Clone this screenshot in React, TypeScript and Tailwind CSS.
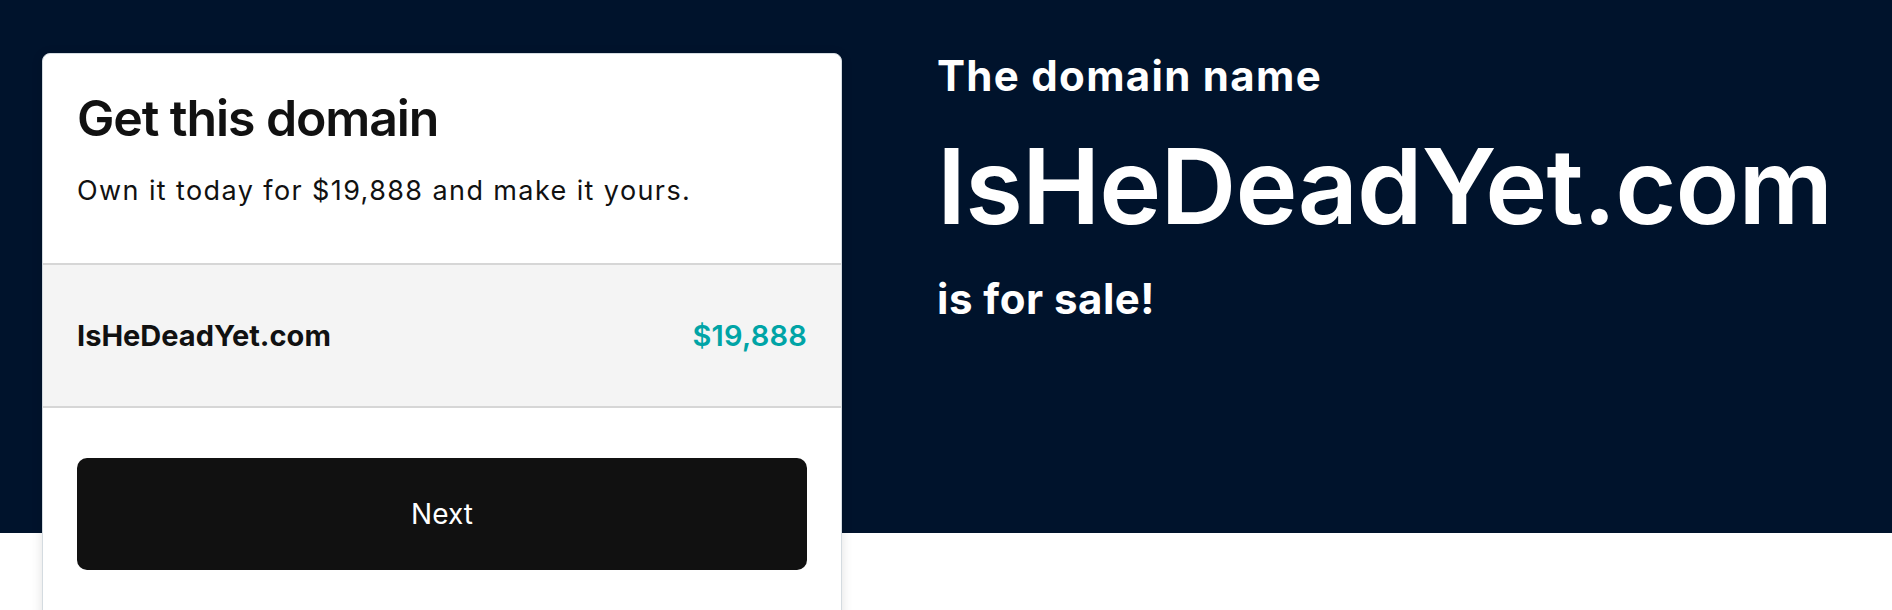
export default function App() {
  return (
    <div className="min-h-[610px] w-full bg-white font-['Inter',sans-serif] overflow-hidden">
      {/* Hero band */}
      <div className="h-[533px] w-full bg-[#00132c]">
        <div className="flex items-start gap-[95px] pl-[42px] pt-[53px]">
          {/* Purchase card */}
          <div className="w-[800px] shrink-0 rounded-t-[8px] border border-[#d4dbe0] bg-white shadow-[0_2px_12px_rgba(0,0,0,0.12)]">
            <div className="px-[34px] pt-[34px] pb-[56px]">
              <h2 className="text-[50px] leading-[60px] font-semibold tracking-[-1.1px] text-[#111111]">
                Get this domain
              </h2>
              <p className="mt-[27px] text-[27px] leading-[32px] tracking-[1.4px] text-[#111111]">
                Own it today for $19,888 and make it yours.
              </p>
            </div>
            <div className="flex h-[145px] items-center justify-between border-y-2 border-[#d6d6d6] bg-[#f4f4f4] px-[34px]">
              <span className="text-[29px] font-bold text-[#111111]">IsHeDeadYet.com</span>
              <span className="text-[29px] font-semibold tracking-[0.2px] text-[#00a4a6]">$19,888</span>
            </div>
            <div className="px-[34px] pt-[50px] pb-[60px]">
              <button className="flex h-[112px] w-full items-center justify-center rounded-[10px] bg-[#111111] text-[28px] text-white">
                Next
              </button>
            </div>
          </div>

          {/* Headline */}
          <div className="flex flex-col text-white">
            <p className="-mt-[2px] text-[42px] leading-[50px] font-bold tracking-[1.3px]">The domain name</p>
            <h1 className="mt-[22px] text-[105px] leading-[126px] font-semibold tracking-[-0.9px]">IsHeDeadYet.com</h1>
            <p className="mt-[25px] text-[42px] leading-[50px] font-bold tracking-[0.5px]">is for sale!</p>
          </div>
        </div>
      </div>
    </div>
  );
}
